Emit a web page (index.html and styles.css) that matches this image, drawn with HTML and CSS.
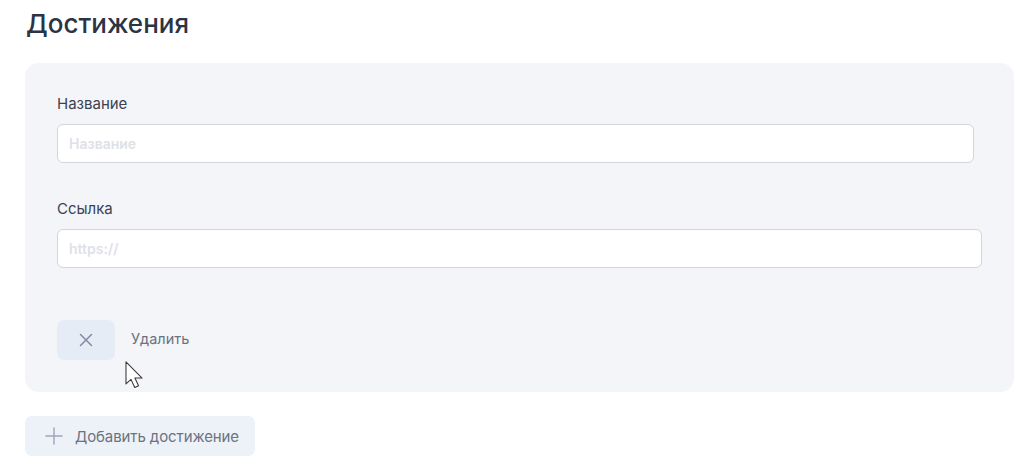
FILE: index.html
```html
<!DOCTYPE html>
<html lang="ru">
<head>
<meta charset="utf-8">
<title>Достижения</title>
<link rel="stylesheet" href="styles.css">
</head>
<body>
<main class="page">
  <h1 class="title">Достижения</h1>
  <section class="card">
    <div class="field">
      <label class="label" for="name">Название</label>
      <input class="input input-short" id="name" type="text" placeholder="Название">
    </div>
    <div class="field">
      <label class="label" for="link">Ссылка</label>
      <input class="input" id="link" type="text" placeholder="https://">
    </div>
    <div class="delete-row">
      <button class="delete-btn" type="button" aria-label="Удалить">
        <svg width="14" height="14" viewBox="0 0 14 14" fill="none" stroke="#7f8ca3" stroke-width="1.5" stroke-linecap="round"><path d="M1.5 1.5L12.5 12.5M12.5 1.5L1.5 12.5"/></svg>
      </button>
      <span class="delete-text">Удалить</span>
      <svg class="cursor" width="19" height="27" viewBox="0 0 14 20"><path d="M0.7 0.7L0.7 17L4.4 13.6L7.2 19.6L10 18.4L7.3 12.6L12.6 12.6Z" fill="#fff" stroke="#3a3a3a" stroke-width="0.8" stroke-linejoin="round"/></svg>
    </div>
  </section>
  <button class="add-btn" type="button">
    <svg width="18" height="18" viewBox="0 0 18 18" fill="none" stroke="#9aa6ba" stroke-width="1.4" stroke-linecap="round"><path d="M9 1V17M1 9H17"/></svg>
    <span>Добавить достижение</span>
  </button>
</main>
</body>
</html>
```
FILE: styles.css
```css
* { box-sizing: border-box; }
html, body { margin: 0; background: #fff; }
body {
  font-family: Inter, "Noto Sans", "Liberation Sans", sans-serif;
  color: #374151;
}
.page {
  padding: 8px 10px 0 25px;
  display: flex;
  flex-direction: column;
  align-items: flex-start;
}
.title {
  margin: 0 0 23px 1px;
  font-size: 26px;
  line-height: 32px;
  font-weight: 500;
  color: #2b3445;
}
.card {
  width: 989px;
  background: #f4f5f9;
  border-radius: 14px;
  padding: 33px 32px 32px;
  display: flex;
  flex-direction: column;
}
.field {
  display: flex;
  flex-direction: column;
  gap: 12px;
  margin-bottom: 38px;
}
.field + .field { margin-bottom: 52px; }
.label {
  font-size: 15px;
  line-height: 16px;
  color: #3a4252;
}
.input {
  height: 39px;
  border: 1px solid #d4d5d9;
  border-radius: 6px;
  background: #fff;
  padding: 0 11px;
  font-family: inherit;
  font-size: 14px;
  font-weight: 600;
  outline: none;
}
.input-short { margin-right: 8px; }
.input::placeholder { color: #dee1e8; }
.delete-row {
  position: relative;
  display: flex;
  align-items: center;
  gap: 16px;
}
.delete-btn {
  width: 58px;
  height: 40px;
  border: none;
  border-radius: 7px;
  background: #e6ecf6;
  display: flex;
  align-items: center;
  justify-content: center;
  padding: 0;
}
.delete-text {
  font-size: 14.5px;
  line-height: 16px;
  margin-top: -2px;
  color: #6b7280;
}
.cursor {
  position: absolute;
  left: 68px;
  top: 41px;
}
.add-btn {
  margin-top: 24px;
  width: 230px;
  height: 40px;
  border: none;
  border-radius: 7px;
  background: #edf1f8;
  display: flex;
  align-items: center;
  gap: 12px;
  padding: 0 0 0 20px;
  font-family: inherit;
  font-size: 15px;
  letter-spacing: -0.1px;
  color: #6b7280;
}
```
